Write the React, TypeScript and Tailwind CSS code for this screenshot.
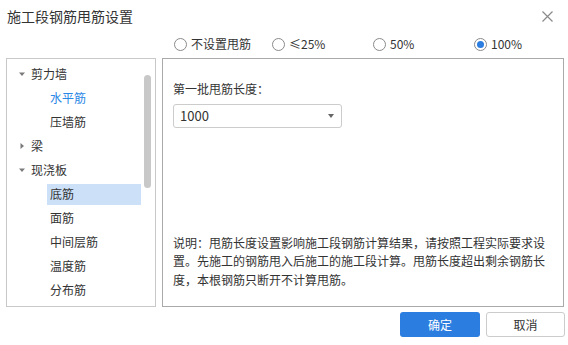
import { useState } from "react"

const FONT = '"Microsoft YaHei", "Noto Sans CJK SC", "Noto Sans", sans-serif'

const options = ["不设置甩筋", "≤25%", "50%", "100%"]
const optionWidths = ["w-[98px]", "w-[101px]", "w-[101px]", "w-[90px]"]

type Node = { label: string; open?: boolean; children?: string[] }

const tree: Node[] = [
  { label: "剪力墙", open: true, children: ["水平筋", "压墙筋"] },
  { label: "梁", open: false, children: [] },
  { label: "现浇板", open: true, children: ["底筋", "面筋", "中间层筋", "温度筋", "分布筋"] },
]

function Caret({ open }: { open?: boolean }) {
  return (
    <svg width="8" height="8" viewBox="0 0 8 8" className="shrink-0">
      {open ? <path d="M1 2.5 L7 2.5 L4 6 Z" fill="#7a7a7a" /> : <path d="M2.5 1 L6 4 L2.5 7 Z" fill="#7a7a7a" />}
    </svg>
  )
}

function Radio({ checked }: { checked: boolean }) {
  return (
    <span className="w-[13px] h-[13px] rounded-full border border-[#8a8a8a] bg-white flex items-center justify-center shrink-0">
      {checked && <span className="w-[7px] h-[7px] rounded-full bg-[#2b7de0]" />}
    </span>
  )
}

export default function App() {
  const [mode, setMode] = useState(3)
  const [active, setActive] = useState("底筋")

  return (
    <div className="w-[568px] h-[345px] bg-white text-[#333] flex flex-col overflow-hidden" style={{ fontFamily: FONT }}>
      {/* title bar */}
      <div className="h-[33px] flex items-center justify-between pl-[7px] pr-[15px]">
        <span className="text-[14px]">施工段钢筋甩筋设置</span>
        <svg width="11" height="11" viewBox="0 0 11 11">
          <path d="M0.5 0.5 L10.5 10.5 M10.5 0.5 L0.5 10.5" stroke="#8a8a8a" strokeWidth="1.2" />
        </svg>
      </div>

      {/* options */}
      <div className="h-[22px] flex items-center pl-[174px] text-[12px]">
        {options.map((o, i) => (
          <label key={o} className={`${optionWidths[i]} flex items-center gap-[4px] cursor-pointer`} onClick={() => setMode(i)}>
            <Radio checked={mode === i} />
            <span>{o}</span>
          </label>
        ))}
      </div>

      {/* panels */}
      <div className="h-[249px] mt-[3px] flex pl-[6px] gap-[6px] text-[12px]">
        <div className="relative w-[150px] border border-[#c8c8c8] pt-[3px]">
          {tree.map((n) => (
            <div key={n.label}>
              <div className="h-[24px] flex items-center pl-[11px] gap-[5px]">
                <Caret open={n.open} />
                <span>{n.label}</span>
              </div>
              {n.open &&
                n.children?.map((c) => (
                  <div key={c} className="h-[24px] flex items-center pl-[40px] pr-[14px]" onClick={() => setActive(c)}>
                    <div className={`w-full h-[21px] flex items-center pl-[3px] ${active === c ? "bg-[#cce0f8]" : ""} ${c === "水平筋" ? "text-[#2a88e6]" : ""}`}>
                      {c}
                    </div>
                  </div>
                ))}
            </div>
          ))}
          <div className="absolute left-[137px] top-[16px] w-[7px] h-[113px] rounded-full bg-[#c8c8c8]" />
        </div>

        <div className="w-[402px] border border-[#aaaaaa] flex flex-col px-[10px]">
          <div className="mt-[22px] h-[16px] flex items-center">第一批甩筋长度：</div>
          <div className="mt-[7px] w-[169px] h-[24px] border border-[#cccccc] rounded-[3px] flex items-center justify-between pl-[6px] pr-[7px]">
            <span className="text-[13px]">1000</span>
            <svg width="6" height="4" viewBox="0 0 6 4">
              <path d="M0 0 L6 0 L3 4 Z" fill="#666" />
            </svg>
          </div>
          <p className="mt-auto mb-[17px] leading-[18.5px] w-[382px]">
            说明：甩筋长度设置影响施工段钢筋计算结果，请按照工程实际要求设置。先施工的钢筋甩入后施工的施工段计算。甩筋长度超出剩余钢筋长度，本根钢筋只断开不计算甩筋。
          </p>
        </div>
      </div>

      {/* footer */}
      <div className="mt-[5px] flex justify-end gap-[6px] pr-[3px] text-[12px]">
        <button className="w-[80px] h-[25px] rounded-[3px] bg-[#2b7de0] text-white">确定</button>
        <button className="w-[79px] h-[25px] rounded-[3px] border border-[#cccccc] bg-white text-[#333]">取消</button>
      </div>
    </div>
  )
}
